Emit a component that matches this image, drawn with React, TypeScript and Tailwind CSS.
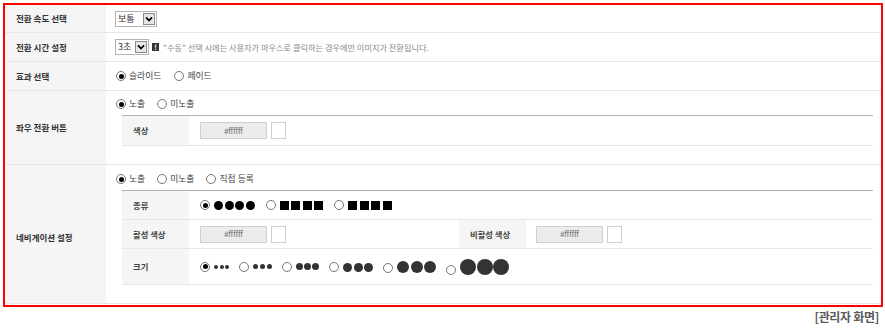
import React from "react";

const FONT = "font-['Noto_Sans_CJK_KR','Noto_Sans',sans-serif]";

/* ------------------------------- small parts ------------------------------ */

function Radio({ checked = false }: { checked?: boolean }) {
  return (
    <span className="inline-flex w-[10px] h-[10px] shrink-0 items-center justify-center rounded-full border border-[#777] bg-white">
      {checked && <span className="w-[5px] h-[5px] rounded-full bg-black" />}
    </span>
  );
}

function RadioText({ label, checked }: { label: string; checked?: boolean }) {
  return (
    <span className="inline-flex items-center gap-[3px] text-[8.8px] leading-[12px] text-[#444]">
      <Radio checked={checked} />
      {label}
    </span>
  );
}

function Select({ value, className }: { value: string; className: string }) {
  return (
    <div className={`flex h-[16px] items-stretch border border-[#b4b4b4] bg-white ${className}`}>
      <span className="flex-1 pl-[2px] text-[9px] leading-[14px] text-[#333]">{value}</span>
      <span className="m-[1px] flex w-[12px] items-center justify-center border border-[#8c8c8c] bg-[#e6e6e6]">
        <svg width="8" height="6" viewBox="0 0 8 6">
          <path d="M1 1.3 L4 4.5 L7 1.3" stroke="#000" strokeWidth="1.7" fill="none" />
        </svg>
      </span>
    </div>
  );
}

function ColorInput() {
  return (
    <div className="flex items-center gap-[4px]">
      <div className="flex h-[17px] w-[67px] items-center justify-center border border-[#cfcfcf] bg-[#ececec] text-[7.5px] text-[#666]">
        #ffffff
      </div>
      <div className="h-[17px] w-[15px] border border-[#cfcfcf] bg-white" />
    </div>
  );
}

function Row({
  label,
  className,
  labelClass = "",
  children,
}: {
  label: string;
  className: string;
  labelClass?: string;
  children: React.ReactNode;
}) {
  return (
    <div className={`flex border-b border-[#e6e6e6] ${className}`}>
      <div className={`flex w-[101px] shrink-0 items-center bg-[#f5f5f5] pl-[11px] text-[8.5px] font-bold text-[#333] ${labelClass}`}>
        {label}
      </div>
      <div className="min-w-0 flex-1">{children}</div>
    </div>
  );
}

function SubLabel({ children }: { children: React.ReactNode }) {
  return (
    <div className="flex w-[67px] shrink-0 items-center bg-[#f5f5f5] pl-[11px] text-[8.3px] font-bold text-[#444]">
      {children}
    </div>
  );
}

const sizeDots = [
  { dot: "w-[4px] h-[4px]", gap: "gap-[1.5px]", align: "items-center" },
  { dot: "w-[5px] h-[5px]", gap: "gap-[2px]", align: "items-center" },
  { dot: "w-[7px] h-[7px]", gap: "gap-[1px]", align: "items-center" },
  { dot: "w-[9px] h-[9px]", gap: "gap-[1.5px]", align: "items-end" },
  { dot: "w-[12px] h-[12px]", gap: "gap-[1.5px]", align: "items-end" },
  { dot: "w-[16px] h-[16px]", gap: "gap-[0.5px]", align: "items-end" },
];

/* -------------------------------- Component ------------------------------- */

export default function App() {
  return (
    <div className={`h-[328px] w-[885px] bg-white pl-[3px] pt-[3px] ${FONT}`}>
      <div className="flex h-[304px] w-[880px] flex-col border-2 border-[#ff0000]">
        {/* 전환 속도 */}
        <Row label="전환 속도 선택" className="h-[28px]">
          <div className="flex h-full items-center pl-[9px]">
            <Select value="보통" className="w-[42px]" />
          </div>
        </Row>

        {/* 전환 시간 */}
        <Row label="전환 시간 설정" className="h-[29px]">
          <div className="flex h-full items-center pl-[9px]">
            <Select value="3초" className="w-[34px]" />
            <span className="ml-[3px] flex h-[8px] w-[7px] items-center justify-center bg-[#333] text-[7px] font-bold leading-none text-white">
              !
            </span>
            <span className="ml-[4px] text-[8.2px] text-[#8a8a8a]">
              "수동" 선택 시에는 사용자가 마우스로 클릭하는 경우에만 이미지가 전환됩니다.
            </span>
          </div>
        </Row>

        {/* 효과 */}
        <Row label="효과 선택" className="h-[29px]">
          <div className="flex h-full items-center gap-[13px] pl-[10px]">
            <RadioText label="슬라이드" checked />
            <RadioText label="페이드" />
          </div>
        </Row>

        {/* 좌우 전환 버튼 */}
        <Row label="좌우 전환 버튼" className="h-[74px]">
          <div className="pt-[7px]">
            <div className="flex h-[12px] items-center gap-[12px] pl-[10px]">
              <RadioText label="노출" checked />
              <RadioText label="미노출" />
            </div>
            <div className="ml-[16px] mr-[8px] mt-[5px] border-t border-[#b0b0b0]">
              <div className="flex h-[30px] border-b border-[#e6e6e6]">
                <SubLabel>색상</SubLabel>
                <div className="flex items-center pl-[11px]">
                  <ColorInput />
                </div>
              </div>
            </div>
          </div>
        </Row>

        {/* 네비게이션 */}
        <Row label="네비게이션 설정" className="h-[139px]" labelClass="pt-[6px]">
          <div className="pt-[8px]">
            <div className="flex h-[12px] items-center gap-[12px] pl-[10px]">
              <RadioText label="노출" checked />
              <RadioText label="미노출" />
              <RadioText label="직접 등록" />
            </div>
            <div className="ml-[16px] mr-[8px] mt-[5px] border-t border-[#b0b0b0]">
              <div className="flex h-[29px] border-b border-[#e6e6e6]">
                <SubLabel>종류</SubLabel>
                <div className="flex items-center gap-[11px] pl-[11px]">
                  <span className="flex items-center gap-[4px]">
                    <Radio checked />
                    <span className="flex gap-[1.5px]">
                      {[0, 1, 2, 3].map((i) => (
                        <span key={i} className="h-[9px] w-[9px] rounded-full bg-black" />
                      ))}
                    </span>
                  </span>
                  {[0, 1].map((k) => (
                    <span key={k} className="flex items-center gap-[4px]">
                      <Radio />
                      <span className="flex gap-[2.5px]">
                        {[0, 1, 2, 3].map((i) => (
                          <span key={i} className="h-[9px] w-[9px] bg-black" />
                        ))}
                      </span>
                    </span>
                  ))}
                </div>
              </div>

              <div className="flex h-[29px] border-b border-[#e6e6e6]">
                <SubLabel>활성 색상</SubLabel>
                <div className="flex w-[270px] shrink-0 items-center pl-[11px]">
                  <ColorInput />
                </div>
                <SubLabel>비활성 색상</SubLabel>
                <div className="flex items-center pl-[10px]">
                  <ColorInput />
                </div>
              </div>

              <div className="flex h-[36px] border-b border-[#e6e6e6]">
                <SubLabel>크기</SubLabel>
                <div className="flex items-center gap-[10px] pl-[11px]">
                  {sizeDots.map((s, k) => (
                    <span key={k} className={`flex gap-[4px] ${s.align}`}>
                      <Radio checked={k === 0} />
                      <span className={`flex ${s.gap}`}>
                        {[0, 1, 2].map((i) => (
                          <span key={i} className={`${s.dot} rounded-full bg-[#333]`} />
                        ))}
                      </span>
                    </span>
                  ))}
                </div>
              </div>
            </div>
          </div>
        </Row>
      </div>

      <div className="mt-[2px] w-[880px] pr-[4px] text-right text-[12px] font-bold leading-[16px] tracking-[-0.3px] text-[#5a5a5a]">
        [관리자 화면]
      </div>
    </div>
  );
}
